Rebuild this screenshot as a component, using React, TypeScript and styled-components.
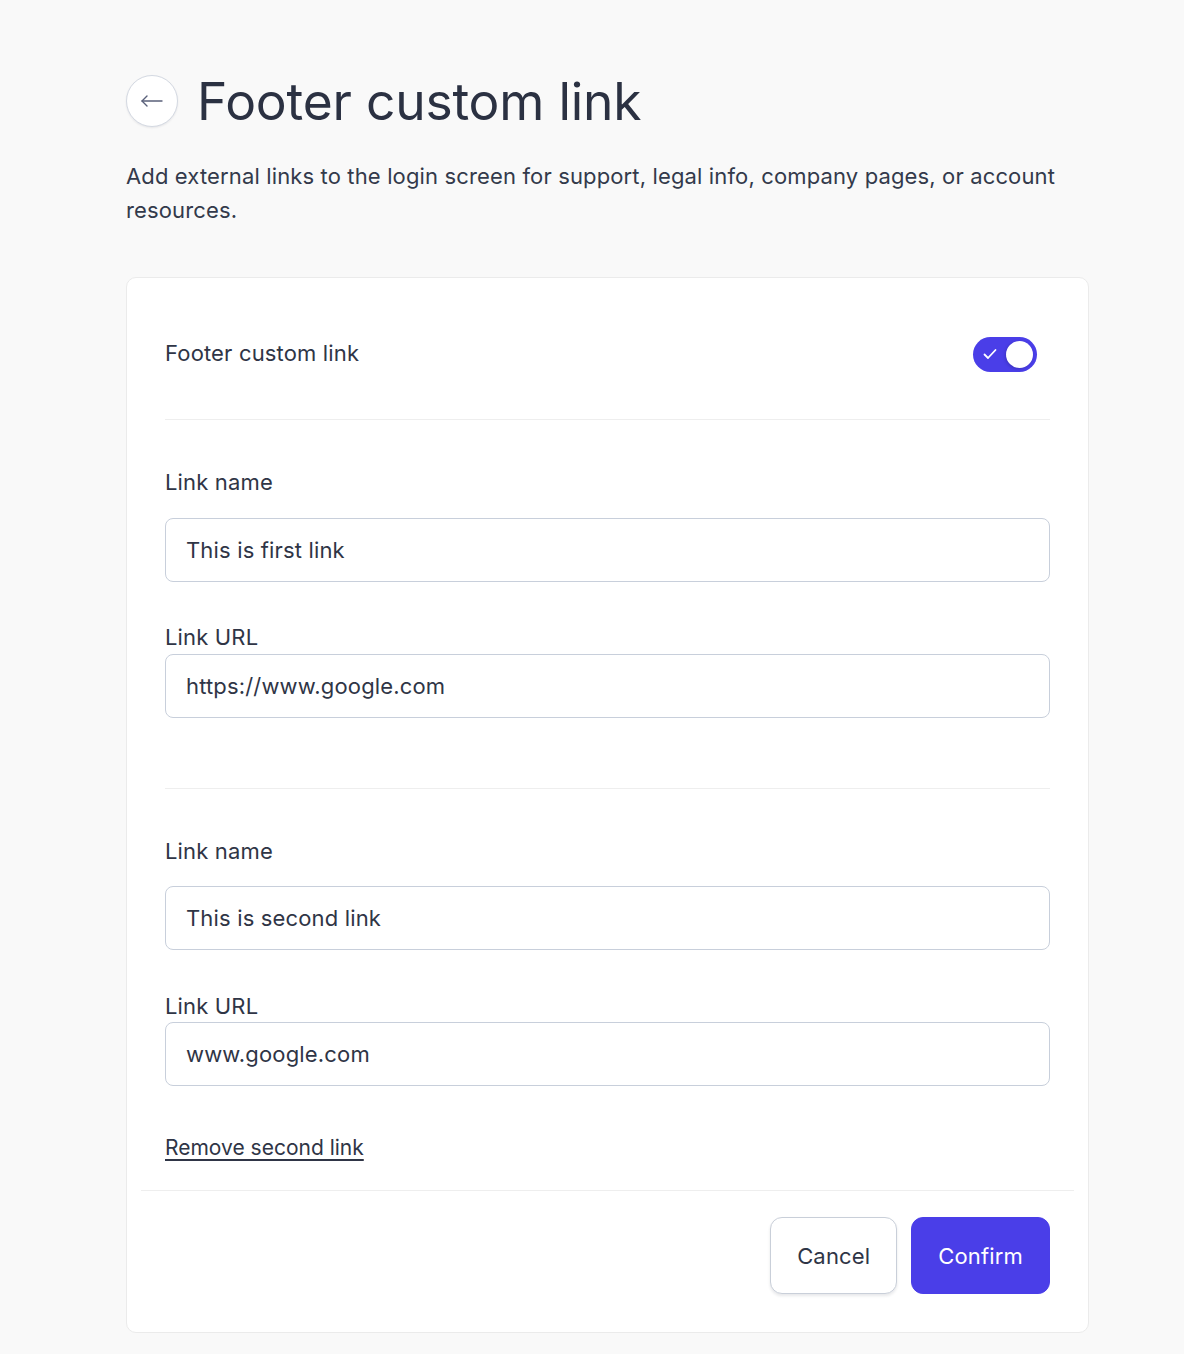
import styled, { createGlobalStyle } from 'styled-components';
import { useState } from 'react';

const GlobalStyle = createGlobalStyle`
  html, body {
    margin: 0;
    padding: 0;
    background: #f9f9f9;
    font-family: Inter, "Noto Sans", sans-serif;
    color: #2f3546;
  }
  * { box-sizing: border-box; }
`;

const Page = styled.div`
  width: 963px;
  margin-left: 126px;
  padding-top: 75px;
  padding-bottom: 22px;
`;

const Header = styled.div`
  display: flex;
  align-items: center;
  gap: 19px;
`;

const BackButton = styled.button`
  width: 52px;
  height: 52px;
  border-radius: 50%;
  border: 1px solid #d4d9e2;
  background: #fff;
  box-shadow: 0 1px 2px rgba(20, 30, 50, 0.08);
  display: flex;
  align-items: center;
  justify-content: center;
  padding: 0;
  cursor: pointer;
`;

const Title = styled.h1`
  margin: 0;
  font-size: 51.5px;
  font-weight: 400;
  line-height: 52px;
  letter-spacing: -0.2px;
  color: #2b3142;
`;

const Description = styled.p`
  margin: 32px 0 0;
  font-size: 22px;
  line-height: 34px;
  letter-spacing: 0.14px;
  color: #333a4b;
`;

const Card = styled.div`
  margin-top: 50px;
  background: #fff;
  border: 1px solid #ebebeb;
  border-radius: 10px;
  padding: 59px 0 38px;
`;

const Inner = styled.div`
  padding: 0 38px;
`;

const ToggleRow = styled.div`
  display: flex;
  align-items: center;
  justify-content: space-between;
  padding-right: 13px;
  height: 35px;
`;

const Label = styled.div<{ $top: number }>`
  margin-top: ${p => p.$top}px;
  font-size: 22px;
  line-height: 30px;
  letter-spacing: 0.16px;
  color: #2f3546;
`;

const ToggleLabel = styled(Label)`
  margin-bottom: 3px;
`;

const Switch = styled.button<{ $on: boolean }>`
  position: relative;
  width: 64px;
  height: 35px;
  border-radius: 18px;
  border: none;
  padding: 0;
  background: ${p => (p.$on ? '#4a3ee8' : '#cfd3dc')};
  cursor: pointer;
`;

const Knob = styled.span<{ $on: boolean }>`
  position: absolute;
  top: 4px;
  left: ${p => (p.$on ? '33px' : '4px')};
  width: 27px;
  height: 27px;
  border-radius: 50%;
  background: #fff;
  box-shadow: -1px 1px 3px rgba(20, 20, 80, 0.25);
`;

const Check = styled.svg`
  position: absolute;
  left: 10px;
  top: 11px;
`;

const Divider = styled.hr<{ $top: number }>`
  margin: ${p => p.$top}px 0 0;
  border: none;
  border-top: 1px solid #eeeeee;
`;

const Input = styled.input<{ $top: number }>`
  display: block;
  width: 100%;
  height: 64px;
  margin-top: ${p => p.$top}px;
  padding: 0 20px;
  border: 1px solid #c8cfdb;
  border-radius: 8px;
  font-family: inherit;
  font-size: 22px;
  letter-spacing: 0.16px;
  color: #2f3546;
  background: #fff;
  outline: none;
`;

const RemoveLink = styled.a`
  display: inline-block;
  margin-top: 47px;
  font-size: 21px;
  line-height: 30px;
  color: #2f3546;
  text-decoration: underline;
  text-underline-offset: 4px;
  text-decoration-thickness: 2px;
  cursor: pointer;
`;

const FooterLine = styled.hr`
  margin: 27px 14px 0;
  border: none;
  border-top: 1px solid #eeeeee;
`;

const Actions = styled.div`
  display: flex;
  justify-content: flex-end;
  gap: 14px;
  margin-top: 26px;
  padding-right: 38px;
`;

const Button = styled.button<{ $primary?: boolean }>`
  height: 77px;
  padding: 0 26px;
  border-radius: 12px;
  font-family: inherit;
  font-size: 22px;
  letter-spacing: 0.16px;
  cursor: pointer;
  border: 1px solid ${p => (p.$primary ? '#4a3ee8' : '#c9cfd9')};
  background: ${p => (p.$primary ? '#4a3ee8' : '#fff')};
  color: ${p => (p.$primary ? '#fff' : '#2f3546')};
  box-shadow: ${p => (p.$primary ? 'none' : '0 2px 3px rgba(20, 30, 50, 0.1)')};
`;

const links = [
  { name: 'This is first link', url: 'https://www.google.com' },
  { name: 'This is second link', url: 'www.google.com' }
];

export default function App() {
  const [on, setOn] = useState(true);

  return (
    <>
      <GlobalStyle />
      <Page>
        <Header>
          <BackButton aria-label="Back">
            <svg width="24" height="24" viewBox="0 0 24 24" fill="none" stroke="#59607a" strokeWidth="1.4" strokeLinecap="round" strokeLinejoin="round">
              <path d="M22 12H2" />
              <path d="M7 7l-5 5 5 5" />
            </svg>
          </BackButton>
          <Title>Footer custom link</Title>
        </Header>
        <Description>
          Add external links to the login screen for support, legal info, company pages, or account resources.
        </Description>

        <Card>
          <Inner>
            <ToggleRow>
              <ToggleLabel $top={0}>Footer custom link</ToggleLabel>
              <Switch $on={on} onClick={() => setOn(!on)} aria-label="Toggle">
                {on && (
                  <Check width="14" height="12" viewBox="0 0 14 12" fill="none" stroke="#fff" strokeWidth="1.8" strokeLinecap="round" strokeLinejoin="round">
                    <path d="M1.5 6.5l3.5 3.5 7.5-8" />
                  </Check>
                )}
                <Knob $on={on} />
              </Switch>
            </ToggleRow>

            <Divider $top={47} />
            <Label $top={47}>Link name</Label>
            <Input $top={21} defaultValue={links[0].name} />
            <Label $top={40}>Link URL</Label>
            <Input $top={2} defaultValue={links[0].url} />

            <Divider $top={70} />
            <Label $top={47}>Link name</Label>
            <Input $top={20} defaultValue={links[1].name} />
            <Label $top={41}>Link URL</Label>
            <Input $top={1} defaultValue={links[1].url} />

            <RemoveLink>Remove second link</RemoveLink>
          </Inner>

          <FooterLine />
          <Actions>
            <Button>Cancel</Button>
            <Button $primary>Confirm</Button>
          </Actions>
        </Card>
      </Page>
    </>
  );
}
